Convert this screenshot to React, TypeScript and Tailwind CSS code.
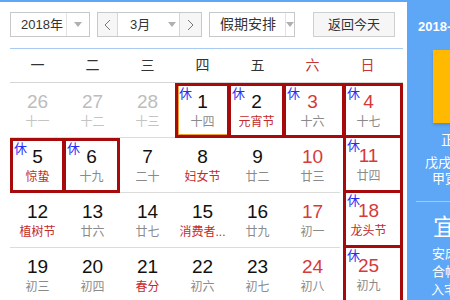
import React from "react";

type Day = {
  n: number;
  l: string;
  prev?: boolean;
  red?: boolean;
  fest?: boolean;
  box?: boolean;
  today?: boolean;
};

const rows: Day[][] = [
  [
    { n: 26, l: "十一", prev: true },
    { n: 27, l: "十二", prev: true },
    { n: 28, l: "十三", prev: true },
    { n: 1, l: "十四", box: true, today: true },
    { n: 2, l: "元宵节", fest: true, box: true },
    { n: 3, l: "十六", red: true, box: true },
    { n: 4, l: "十七", red: true, box: true },
  ],
  [
    { n: 5, l: "惊蛰", fest: true, box: true },
    { n: 6, l: "十九", box: true },
    { n: 7, l: "二十" },
    { n: 8, l: "妇女节", fest: true },
    { n: 9, l: "廿二" },
    { n: 10, l: "廿三", red: true },
    { n: 11, l: "廿四", red: true, box: true },
  ],
  [
    { n: 12, l: "植树节", fest: true },
    { n: 13, l: "廿六" },
    { n: 14, l: "廿七" },
    { n: 15, l: "消费者...", fest: true },
    { n: 16, l: "廿九" },
    { n: 17, l: "初一", red: true },
    { n: 18, l: "龙头节", red: true, fest: true, box: true },
  ],
  [
    { n: 19, l: "初三" },
    { n: 20, l: "初四" },
    { n: 21, l: "春分", fest: true },
    { n: 22, l: "初六" },
    { n: 23, l: "初七" },
    { n: 24, l: "初八", red: true },
    { n: 25, l: "初九", red: true, box: true },
  ],
];

const weekdays = ["一", "二", "三", "四", "五", "六", "日"];

function Caret() {
  return (
    <span className="block h-0 w-0 border-x-[4px] border-t-[5px] border-x-transparent border-t-[#b0b0b0]" />
  );
}

function Chevron({ dir }: { dir: "l" | "r" }) {
  return (
    <svg width="7" height="12" viewBox="0 0 7 12">
      <polyline
        points={dir === "l" ? "6,1 1,6 6,11" : "1,1 6,6 1,11"}
        fill="none"
        stroke="#777"
        strokeWidth="1"
      />
    </svg>
  );
}

function Cell({
  d,
  col,
  leftBox,
  rightBox,
  upBox,
}: {
  d: Day;
  col: number;
  leftBox: boolean;
  rightBox: boolean;
  upBox: boolean;
}) {
  const sunday = col === 6;
  const numColor = d.prev ? "text-[#bdbdbd]" : d.red ? "text-[#d63a3a]" : "text-[#111]";
  const lunColor = d.prev ? "text-[#c4c4c4]" : d.fest ? "text-[#c52a2a]" : "text-[#8a8a8a]";
  const frame = d.box ? "border-[3px] border-[#a60a0a]" : "border-b border-[#dcdcdc]";
  const today = d.today ? "shadow-[inset_1px_-1px_0_0_#f0a030]" : "";
  let horiz = "";
  if (sunday) horiz = "ml-[3px] pr-[9px]";
  else if (d.box && leftBox && col === 5 && rightBox) horiz = "-ml-[2px] -mr-[5px] pr-[3px]";
  else if (d.box && leftBox) horiz = "-ml-[2px]";
  const vert = d.box && upBox ? "-mt-[3px] h-[58px]" : "h-[55px]";
  return (
    <div
      className={`relative flex flex-col items-center justify-center ${vert} ${frame} ${today} ${horiz}`}
    >
      {d.box && (
        <span className="absolute left-[1px] top-[0px] text-[13px] leading-[15px] text-[#2a2af5]">
          休
        </span>
      )}
      <span className={`text-[19px] leading-[22px] ${numColor}`}>{d.n}</span>
      <span className={`mt-[1px] whitespace-nowrap text-[12px] leading-[16px] ${lunColor}`}>
        {d.l}
      </span>
    </div>
  );
}

export default function App() {
  return (
    <div
      className="flex h-[300px] w-[450px] flex-col overflow-hidden bg-white"
      style={{ fontFamily: '"Liberation Sans", "Noto Sans CJK SC", sans-serif' }}
    >
      <div className="h-[2px] w-full shrink-0 bg-[#5ea6f6]" />
      <div className="flex min-h-0 flex-1">
        {/* left calendar */}
        <div className="w-[407px] shrink-0 pl-[10px]">
          <div className="mt-[10px] flex h-[25px] text-[13px] text-[#333]">
            <div className="flex w-[80px] border border-[#c8c8c8] bg-white">
              <div className="flex w-[55px] items-center pl-[10px]">2018年</div>
              <div className="flex flex-1 items-center justify-center border-l border-[#e2e2e2]">
                <Caret />
              </div>
            </div>
            <div className="ml-[7px] flex w-[105px] border border-[#c8c8c8] bg-white">
              <div className="flex w-[20px] items-center justify-center border-r border-[#d6d6d6] bg-[#f6f6f6]">
                <Chevron dir="l" />
              </div>
              <div className="flex flex-1 items-center pl-[12px]">
                <span>3月</span>
                <span className="ml-[18px]">
                  <Caret />
                </span>
              </div>
              <div className="flex w-[22px] items-center justify-center border-l border-[#d6d6d6] bg-[#f6f6f6]">
                <Chevron dir="r" />
              </div>
            </div>
            <div className="ml-[7px] flex w-[86px] border border-[#c8c8c8] bg-white">
              <div className="flex w-[75px] items-center pl-[10px] text-[14px]">假期安排</div>
              <div className="flex flex-1 items-center justify-center border-l border-[#e2e2e2]">
                <Caret />
              </div>
            </div>
            <div className="ml-[18px] flex w-[82px] items-center justify-center border border-[#cfcfcf] bg-[#f6f6f6]">
              返回今天
            </div>
          </div>
          <div className="mt-[11px] h-px w-[393px] bg-[#a9cbf3]" />
          <div className="grid h-[34px] w-[393px] grid-cols-[55px_55px_55px_55px_55px_55px_63px] border-b border-[#d6d6d6] text-[14px]">
            {weekdays.map((w, i) => (
              <div
                key={w}
                className={`flex items-center justify-center ${
                  i >= 5 ? "text-[#c93535]" : "text-[#333]"
                } ${i === 6 ? "pr-[8px]" : ""}`}
              >
                {w}
              </div>
            ))}
          </div>
          <div className="grid w-[393px] grid-cols-[55px_55px_55px_55px_55px_55px_63px]">
            {rows.map((row, r) =>
              row.map((d, c) => (
                <Cell
                  key={`${r}-${c}`}
                  d={d}
                  col={c}
                  leftBox={c > 0 && !!row[c - 1].box}
                  rightBox={c < 6 && !!row[c + 1].box}
                  upBox={r > 0 && !!rows[r - 1][c].box}
                />
              ))
            )}
          </div>
        </div>
        {/* right info panel */}
        <div className="flex flex-1 flex-col overflow-hidden whitespace-nowrap bg-[#5ea6f6] text-white">
          <div className="mt-[16px] pl-[11px] text-[13px] font-bold leading-[18px]">
            2018-03-01 星期四
          </div>
          <div className="ml-[26px] mt-[14px] h-[73px] w-[88px] shrink-0 bg-[#ffb900] shadow-[0_2px_3px_rgba(0,0,0,0.15)]" />
          <div className="mt-[9px] pl-[34px] text-[14px] leading-[16px]">正月十四</div>
          <div className="mt-[7px] pl-[18px] text-[13px] leading-[16px]">戊戌年【狗年】</div>
          <div className="pl-[25px] text-[13px] leading-[16px]">甲寅月 丁巳日</div>
          <div className="ml-[9px] mt-[14px] h-px bg-[#9ccaf9]" />
          <div className="mt-[12px] pl-[26px] text-[23px] leading-[26px]">宜</div>
          <div className="mt-[5px] pl-[25px] text-[13px] leading-[18px]">安床</div>
          <div className="pl-[25px] text-[13px] leading-[18px]">合帐</div>
          <div className="pl-[24px] text-[13px] leading-[18px]">入宅</div>
        </div>
      </div>
    </div>
  );
}
